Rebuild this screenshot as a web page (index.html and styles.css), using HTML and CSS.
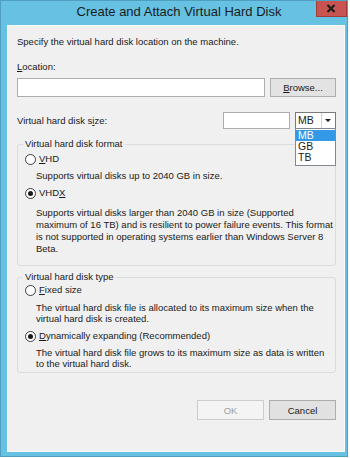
FILE: index.html
```html
<!DOCTYPE html>
<html lang="en">
<head>
  <meta charset="UTF-8" />
  <title>Create and Attach Virtual Hard Disk</title>
  <link rel="stylesheet" href="styles.css">
</head>
<body>
  <div class="window">
    <div class="titlebar">
      <span class="title">Create and Attach Virtual Hard Disk</span>
      <svg class="caption-close" width="31" height="16" viewBox="0 0 31 16">
        <rect x="0.5" y="-1" width="30" height="16.5" fill="#c75450" stroke="#9e3d39"/>
        <path d="M11.5 4 L18.5 11 M18.5 4 L11.5 11" stroke="#1e1e1e" stroke-width="2.2"/>
      </svg>
    </div>

    <div class="panel">
      <p class="intro">Specify the virtual hard disk location on the machine.</p>

      <label class="field-label"><u>L</u>ocation:</label>
      <div class="location-row">
        <input type="text" class="textbox">
        <button class="btn browse"><u>B</u>rowse...</button>
      </div>

      <div class="size-row">
        <span class="size-label">Virtual hard disk s<u>i</u>ze:</span>
        <input type="text" class="textbox size-box">
        <div class="combo">
          <span class="combo-value">MB</span>
          <span class="combo-arrow"></span>
          <ul class="combo-list">
            <li class="selected">MB</li>
            <li>GB</li>
            <li>TB</li>
          </ul>
        </div>
      </div>

      <fieldset class="group format">
        <legend>Virtual hard disk format</legend>
        <div class="option first"><span class="radio"></span><u>V</u>HD</div>
        <p class="desc">Supports virtual disks up to 2040 GB in size.</p>
        <div class="option"><span class="radio checked"></span>VHD<u>X</u></div>
        <p class="desc long">Supports virtual disks larger than 2040 GB in size (Supported<br>maximum of 16 TB) and is resilient to power failure events. This format<br>is not supported in operating systems earlier than Windows Server 8<br>Beta.</p>
      </fieldset>

      <fieldset class="group type">
        <legend>Virtual hard disk type</legend>
        <div class="option first"><span class="radio"></span><u>F</u>ixed size</div>
        <p class="desc">The virtual hard disk file is allocated to its maximum size when the<br>virtual hard disk is created.</p>
        <div class="option"><span class="radio checked"></span><u>D</u>ynamically expanding (Recommended)</div>
        <p class="desc">The virtual hard disk file grows to its maximum size as data is written<br>to the virtual hard disk.</p>
      </fieldset>

      <div class="actions">
        <button class="btn ok" disabled>OK</button>
        <button class="btn cancel">Cancel</button>
      </div>
    </div>
  </div>
</body>
</html>
```

FILE: styles.css
```css
:root {
  --frame: #66c1e3;
  --frame-edge: #4f9fc0;
  --panel: #f0f0f0;
  --text: #1a1a1a;
  --group: #d8dde0;
  --input: #abadb3;
}

body {
  margin: 0;
  background: #ffffff;
  font-family: 'Liberation Sans', Arial, sans-serif;
  font-size: 9.5px;
  color: var(--text);
}

.window {
  width: 348px;
  height: 457px;
  box-sizing: border-box;
  background: var(--frame);
  border: 1px solid var(--frame-edge);
  padding: 0 2px 4px 6px;
  display: flex;
  flex-direction: column;
}

.titlebar {
  height: 24px;
  display: grid;
  grid-template-columns: 31px 1fr 31px;
  margin-right: -2px;
}

.title {
  grid-column: 2;
  align-self: center;
  text-align: center;
  font-size: 13px;
  color: #1c1c1c;
  padding: 0 0 4px 4px;
}

.caption-close {
  grid-column: 3;
  align-self: start;
  display: block;
}

.panel {
  flex: 1;
  background: var(--panel);
  border: 1px solid #f7fafb;
  padding: 10px 8px 0 9px;
  display: flex;
  flex-direction: column;
}

.intro {
  margin: 0;
  line-height: 12px;
}

.field-label {
  margin-top: 13px;
  line-height: 12px;
}

.location-row {
  margin-top: 5px;
  display: flex;
  gap: 5px;
}

.textbox {
  box-sizing: border-box;
  height: 19px;
  border: 1px solid var(--input);
  background: #ffffff;
  margin: 0;
  padding: 0 3px;
  font: inherit;
}

.location-row .textbox {
  flex: 1;
}

.btn {
  box-sizing: border-box;
  height: 19px;
  font: inherit;
  color: var(--text);
  background: #e3e3e3;
  border: 1px solid #adadad;
  padding: 0;
}

.browse {
  width: 66px;
}

.size-row {
  margin-top: 15px;
  display: flex;
  align-items: center;
  gap: 5px;
}

.size-label {
  flex: 1;
}

.size-box {
  width: 67px;
  height: 17px;
}

.combo {
  position: relative;
  box-sizing: border-box;
  width: 41px;
  height: 17px;
  border: 1px solid #7a7a7a;
  background: #ffffff;
  display: flex;
  font-size: 10.5px;
}

.combo-value {
  flex: 1;
  padding-left: 2px;
  line-height: 15px;
  border-right: 1px solid #d0d0d0;
}

.combo-arrow {
  width: 13px;
  position: relative;
}

.combo-arrow::after {
  content: "";
  position: absolute;
  left: 3px;
  top: 6px;
  border-left: 3.5px solid transparent;
  border-right: 3.5px solid transparent;
  border-top: 3.5px solid #1a1a1a;
}

.combo-list {
  position: absolute;
  left: -1px;
  top: 15px;
  width: 41px;
  box-sizing: border-box;
  margin: 0;
  padding: 1px 0 2px;
  list-style: none;
  background: #ffffff;
  border: 1px solid #828790;
  z-index: 2;
}

.combo-list li {
  line-height: 11px;
  padding-left: 2px;
}

.combo-list .selected {
  background: #3399e6;
  color: #ffffff;
}

.group {
  border: 1px solid var(--group);
  border-radius: 3px;
  margin: 9px 0 0;
  padding: 0 0 5px 7px;
}

.group legend {
  padding: 0 2px;
  margin-left: -2px;
  line-height: 12px;
}

.option {
  display: flex;
  align-items: center;
  line-height: 12px;
  margin-top: 2px;
}

.option.first {
  margin-top: 3px;
}

.radio {
  box-sizing: border-box;
  width: 11px;
  height: 11px;
  border: 1px solid #3c3c3c;
  border-radius: 50%;
  background: #ffffff;
  margin-right: 3px;
  display: flex;
  align-items: center;
  justify-content: center;
}

.radio.checked::after {
  content: "";
  width: 5px;
  height: 5px;
  border-radius: 50%;
  background: #1a1a1a;
}

.desc {
  margin: 5px -12px 5px 11px;
  line-height: 12px;
  white-space: nowrap;
}

.desc.long {
  margin-top: 8px;
}

.type {
  margin-top: 5px;
  padding-bottom: 3px;
}

.type .option.first {
  margin-top: 1px;
}

.type .option {
  margin-top: 6px;
}

.type .desc {
  margin-top: 6px;
  line-height: 11px;
}

.type .desc:last-child {
  margin-top: 5px;
  margin-bottom: 0;
}

.actions {
  margin-top: 27px;
  display: flex;
  justify-content: flex-end;
  gap: 5px;
}

.actions .btn {
  width: 67px;
  height: 20px;
}

.ok {
  background: #f4f4f4;
  border-color: #cccccc;
  color: #a0a0a0;
}

.cancel {
  background: #e1e1e1;
  border-color: #adadad;
}
```
